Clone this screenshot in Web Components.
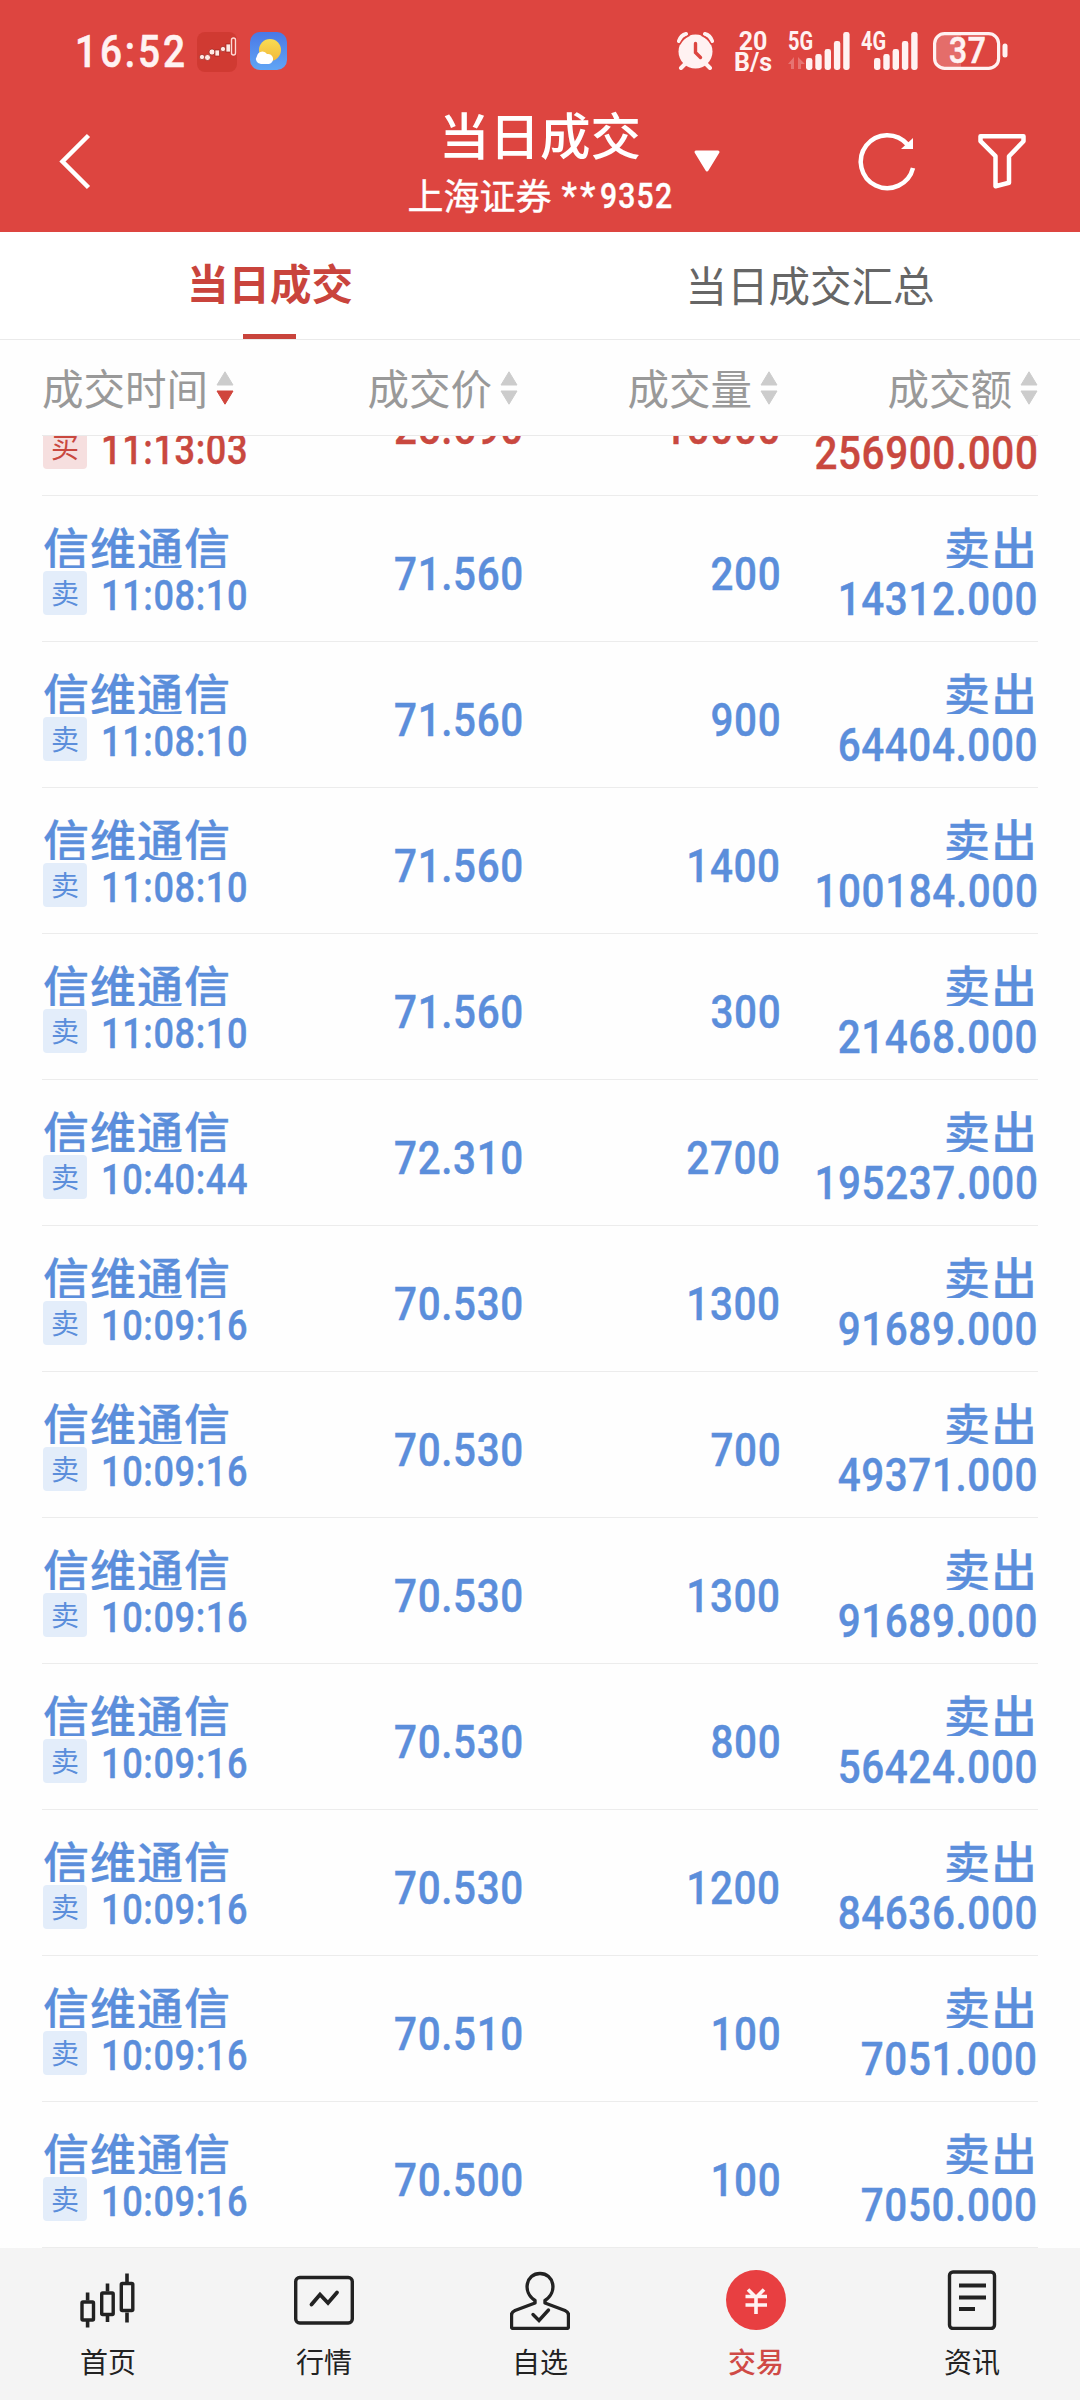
<!DOCTYPE html>
<html lang="zh-CN">
<head>
<meta charset="utf-8">
<title>当日成交</title>
<style>
    body {
        margin: 0;
        width: 1080px;
        height: 2400px;
        overflow: hidden;
        background: #fefefe;
        font-family: Roboto, "Noto Sans CJK SC", sans-serif;
    }
</style>
</head>
<body>
<trade-page></trade-page>

<script>
class BaseElement extends HTMLElement {
    constructor() {
        super();
        this.attachShadow({ mode: "open" });
    }
    connectedCallback() {
        const template = document.createElement('template');
        template.innerHTML = `<style>${this.getStyles()}</style>${this.getTemplate()}`;
        this.shadowRoot.replaceChildren(template.content.cloneNode(true));
    }
}

// Condensed digits, anchored left or right
class NumText extends BaseElement {
    getStyles() {
        const right = this.getAttribute('anchor') === 'right';
        return `
            :host { display: flex; justify-content: ${right ? 'flex-end' : 'flex-start'}; font-family: Roboto, sans-serif; font-weight: 500; line-height: 1; white-space: nowrap; }
            span { flex: none; transform: scaleX(.86); transform-origin: ${right ? 'right' : 'left'} center; letter-spacing: var(--gap, .7px); }
        `;
    }
    getTemplate() {
        return `<span><slot></slot></span>`;
    }
}

class SignalBars extends BaseElement {
    getStyles() {
        return `
            :host { display: block; position: relative; width: 62px; height: 38px; }
            span { position: absolute; left: 0; top: -3px; font: 700 25px/25px Roboto, sans-serif; transform: scaleX(.8); transform-origin: left; }
            svg { display: block; }
        `;
    }
    getTemplate() {
        const x = Number(this.getAttribute('x'));
        const tops = [26, 22, 17, 9, 0];
        const bars = tops.map((t, i) => `<rect x="${x + i * 9.3}" y="${t}" width="6.4" height="${38 - t}" rx="2.4"/>`).join('');
        const arrows = this.hasAttribute('data') ? `<path opacity=".28" d="M0 32l6-7v12h-3v-5zM10 37v-12l7 7h-4v5z"/>` : '';
        return `<span><slot></slot></span><svg width="62" height="38" fill="#fff2f2">${bars}${arrows}</svg>`;
    }
}

class StatusBar extends BaseElement {
    getStyles() {
        return `
            :host { display: flex; align-items: flex-start; height: 71px; padding: 32px 71px 0 75px; box-sizing: border-box; color: #fff2f2; }
            svg { display: block; }
            .clock { --gap: 3.4px; width: 122px; height: 38px; font-size: 45px; margin-top: -3px; -webkit-text-stroke: .6px #fff2f2; }
            .weather { margin-left: 13px; }
            .alarm { margin-left: auto; }
            .rate { width: 40px; margin: -1px 15px 0 19px; font: 700 25px/21px Roboto, sans-serif; text-align: center; }
            .second { margin-left: 11px; }
            .battery { position: relative; margin-left: 10px; width: 76px; height: 38px; }
            .battery num-text { position: absolute; left: 16px; top: 0; font-size: 37px; -webkit-text-stroke: .6px #fff2f2; }
        `;
    }
    getTemplate() {
        return `
            <num-text class="clock">16:52</num-text>
            <svg width="40" height="40" viewBox="0 0 40 40">
                <rect width="40" height="40" rx="8" fill="#d03a32"/>
                <g fill="#ffe9e4" stroke="#9d211b" stroke-width=".7">
                    <circle cx="5" cy="25" r="2.600"/><circle cx="10.500" cy="25.500" r="3"/><circle cx="15" cy="20" r="3"/>
                    <rect x="18" y="18" width="4.500" height="6"/><circle cx="26" cy="17" r="2.600"/><rect x="29" y="12" width="4.500" height="8"/>
                </g>
                <rect x="34.500" y="6" width="4" height="17" rx="2" fill="none" stroke="#ffd9d4" stroke-width="1.400"/>
            </svg>
            <svg class="weather" width="37" height="38" viewBox="0 0 37 38">
                <defs>
                    <linearGradient id="sky" x2="0" y2="1"><stop stop-color="#4a78e6"/><stop offset="1" stop-color="#60a5f5"/></linearGradient>
                    <linearGradient id="sun" x2="0" y2="1"><stop stop-color="#f8dc52"/><stop offset="1" stop-color="#f3b93c"/></linearGradient>
                </defs>
                <rect width="37" height="38" rx="10" fill="url(#sky)"/>
                <circle cx="20" cy="18" r="11" fill="url(#sun)"/>
                <path d="M11 32a5 5 0 0 1-4-8a5.500 5.500 0 0 1 10-2a5 5 0 0 1 2 10z" fill="#fff"/>
            </svg>
            <svg class="alarm" width="37" height="38" viewBox="0 0 37 38" fill="none" stroke="#fff2f2" stroke-width="4" stroke-linecap="round">
                <circle cx="18.500" cy="19.500" r="17" fill="#fff2f2" stroke="none"/>
                <path d="M2 9q2-6 7-7M35 9q-2-6-7-7M8 32l-4 4M29 32l4 4"/>
                <path stroke="#dd4540" stroke-width="1.600" d="M3 12Q6 6 12 3.500M34 12Q31 6 25 3.500"/>
                <path stroke="#dd4540" stroke-width="3.400" d="M18.500 11.500v9l5 5"/>
            </svg>
            <div class="rate">20<br>B/s</div>
            <signal-bars x="18" data>5G</signal-bars>
            <signal-bars class="second" x="13">4G</signal-bars>
            <div class="battery">
                <svg width="76" height="38" fill="none" stroke="#fff2f2" stroke-width="3.200">
                    <path d="M10 2h18v34h-18q-8 0-8-8v-18q0-8 8-8z" fill="#fff" fill-opacity=".22" stroke="none"/>
                    <rect x="1.600" y="1.600" width="64" height="34.800" rx="10"/>
                    <rect x="69.500" y="11.500" width="5" height="14" rx="2.500" fill="#fff2f2" stroke="none"/>
                </svg>
                <num-text>37</num-text>
            </div>
        `;
    }
}

class TitleBar extends BaseElement {
    getStyles() {
        return `
            :host { display: grid; height: 161px; box-sizing: border-box; color: #fff; }
            .middle { grid-area: 1 / 1; display: flex; flex-direction: column; align-items: center; }
            h1 { margin: 32px 0 0; font-size: 50.500px; line-height: 60px; font-weight: 500; font-family: "Noto Sans CJK SC", sans-serif; }
            .account { display: flex; align-items: center; height: 44px; margin-top: 9px; font: 400 36px/44px "Noto Sans CJK SC", sans-serif; -webkit-text-stroke: .4px #fff; }
            .stars { margin: 4px 0 0 10px; width: 38px; line-height: 36px; letter-spacing: 3px; font-family: Roboto, sans-serif; }
            num-text { --gap: 1.4px; width: 73px; font-size: 35px; margin-top: 4px; }
            svg { grid-area: 1 / 1; }
        `;
    }
    getTemplate() {
        return `
            <div class="middle">
                <h1><slot name="title"></slot></h1>
                <div class="account"><slot name="broker"></slot><span class="stars">**</span><num-text>9352</num-text></div>
            </div>
            <svg width="1080" height="161" viewBox="0 71 1080 161" fill="none" stroke="#fff" stroke-width="4.500">
                <path d="M88.500 135.500L62.500 161.500L88.500 187.500"/>
                <path d="M696 152h22l-11 18z" fill="#fff" stroke-width="3" stroke-linejoin="round"/>
                <path d="M907.500 144.500A26.500 26.500 0 1 0 913 168"/>
                <path d="M913 138v11h-12z" fill="#fff" stroke="none"/>
                <path d="M980.500 136.200h43v5l-14.500 15v26.500l-13.500 3.500v-30l-15-15z" stroke-linejoin="round"/>
            </svg>
        `;
    }
}

class TabItem extends BaseElement {
    getStyles() {
        return `
            :host { flex: 1; display: flex; flex-direction: column; align-items: center; font-size: 41.500px; line-height: 60px; color: #666; padding-top: 22px; font-family: "Noto Sans CJK SC", sans-serif; }
            :host([active]) { color: #c9443c; font-weight: 700; padding-top: 20px; }
            i { display: none; width: 53px; height: 5px; background: #c9443c; margin: auto 2px 0 0; }
            :host([active]) i { display: block; }
        `;
    }
    getTemplate() {
        return `<slot></slot><i></i>`;
    }
}

class TabBar extends BaseElement {
    getStyles() {
        return `:host { display: flex; height: 108px; box-sizing: border-box; background: #fff; border-bottom: 1px solid #eaeaea; }`;
    }
    getTemplate() {
        return `<slot></slot>`;
    }
}

class SortLabel extends BaseElement {
    getStyles() {
        return `
            :host { display: flex; align-items: center; gap: 8px; color: #999; font: 400 41.500px/60px "Noto Sans CJK SC", sans-serif; }
            svg { margin-top: 2px; }
        `;
    }
    getTemplate() {
        const down = this.getAttribute('sort') === 'down' ? '#d0453c' : '#ccc';
        return `
            <slot></slot>
            <svg width="18" height="34" stroke-width="1" stroke-linejoin="round">
                <path d="M9 .8l8 13.200h-16z" fill="#ccc" stroke="#ccc"/>
                <path d="M9 33.200l8-13.200h-16z" fill="${down}" stroke="${down}"/>
            </svg>
        `;
    }
}

class TableHead extends BaseElement {
    getStyles() {
        return `
            :host { display: grid; grid-template-columns: 231px 245px 260px 260px; justify-content: start; margin: 0 42px; padding-bottom: 2px; height: 96px; box-sizing: border-box; border-bottom: 1px solid #eaeaea; align-items: center; }
            sort-label { justify-self: end; }
            sort-label[sort] { justify-self: start; }
        `;
    }
    getTemplate() {
        return `
            <sort-label sort="down">成交时间</sort-label>
            <sort-label>成交价</sort-label>
            <sort-label>成交量</sort-label>
            <sort-label>成交额</sort-label>
        `;
    }
}

class TradeRow extends BaseElement {
    getStyles() {
        return `
            :host { --main: #5b8edb; --soft: #e3edfa; display: grid; grid-template-columns: 231px 251px 257px 257px; margin: 0 42px; height: 146px; box-sizing: border-box; border-bottom: 1px solid #ececec; color: var(--main); }
            :host([side="买"]) { --main: #c9483f; --soft: #f6dfdf; }
            .name { height: 49px; margin-top: 23px; padding-left: 1px; overflow: hidden; font: 500 46px/55px "Noto Sans CJK SC", sans-serif; letter-spacing: 1px; -webkit-text-stroke: .3px var(--main); white-space: nowrap; }
            .time { display: flex; align-items: flex-start; margin-top: 3px; padding-left: 1px; }
            .tag { flex: none; width: 44px; height: 44px; border-radius: 4px; background: var(--soft); font: 400 28px/43px "Noto Sans CJK SC", sans-serif; text-align: center; }
            .time num-text { margin: 4px 0 0 14px; font-size: 42px; }
            num-text { -webkit-text-stroke: .4px var(--main); }
            .mid { margin-top: 54px; font-size: 47px; }
            .deal { text-align: right; }
            .sum { margin-top: 7px; font-size: 47px; }
        `;
    }
    getTemplate() {
        const get = key => this.getAttribute(key);
        return `
            <div>
                <div class="name">${get('name')}</div>
                <div class="time"><span class="tag">${get('side')}</span><num-text>${get('time')}</num-text></div>
            </div>
            <num-text class="mid" anchor="right">${get('price')}</num-text>
            <num-text class="mid" anchor="right">${get('volume')}</num-text>
            <div class="deal">
                <div class="name">${get('side') === '买' ? '' : '卖出'}</div>
                <num-text class="sum" anchor="right">${get('amount')}</num-text>
            </div>
        `;
    }
}

class TradeList extends BaseElement {
    getStyles() {
        return `
            :host { display: flex; flex-direction: column; justify-content: flex-end; height: 1812px; overflow: hidden; }
            trade-row { flex: none; }
        `;
    }
    getTemplate() {
        const rows = [
            ['买', '11:13:03', '25.690', '10000', '256900.000'],
            ['卖', '11:08:10', '71.560', '200', '14312.000'],
            ['卖', '11:08:10', '71.560', '900', '64404.000'],
            ['卖', '11:08:10', '71.560', '1400', '100184.000'],
            ['卖', '11:08:10', '71.560', '300', '21468.000'],
            ['卖', '10:40:44', '72.310', '2700', '195237.000'],
            ['卖', '10:09:16', '70.530', '1300', '91689.000'],
            ['卖', '10:09:16', '70.530', '700', '49371.000'],
            ['卖', '10:09:16', '70.530', '1300', '91689.000'],
            ['卖', '10:09:16', '70.530', '800', '56424.000'],
            ['卖', '10:09:16', '70.530', '1200', '84636.000'],
            ['卖', '10:09:16', '70.510', '100', '7051.000'],
            ['卖', '10:09:16', '70.500', '100', '7050.000']
        ];
        return rows.map(([side, time, price, volume, amount], i) => `
            <trade-row name="${i ? '信维通信' : ''}" side="${side}" time="${time}" price="${price}" volume="${volume}" amount="${amount}"></trade-row>
        `).join('');
    }
}

class NavItem extends BaseElement {
    getStyles() {
        return `
            :host { flex: 1; display: flex; flex-direction: column; align-items: center; color: #222; font: 400 28px/40px "Noto Sans CJK SC", sans-serif; padding-top: 22px; }
            :host([active]) { color: #cf4a46; font-weight: 500; }
            svg { display: block; margin-bottom: 11px; }
        `;
    }
    getTemplate() {
        const icons = {
            home: `<path stroke-width="3.600" d="M9.600 22.500v8M9.600 51v6.500M29.500 13.500v8M29.500 46v6M49 3.500v9.500M49 42.500v10"/>
                <rect x="4" y="32" width="11.500" height="18" rx="1"/><rect x="23.700" y="23" width="11.500" height="21.500" rx="1"/><rect x="43.300" y="13.500" width="11.500" height="27" rx="1"/>`,
            market: `<rect x="1.700" y="7.500" width="56.600" height="45.500" rx="4"/><path stroke-width="3.800" stroke-linecap="round" d="M17.500 34.500l8.500-10l8 8.500l9-10.500"/>`,
            pick: `<path d="M25 30.500C12 22 16 3.500 30 3.500S48 22 35 30.500v2.500l20 7.500q3.500 1.500 3.500 4.500v11.500q0 2-2 2h-53q-2 0-2-2v-11.500q0-3 3.500-4.500l20-7.500z" stroke-linejoin="round"/><path stroke-linecap="round" d="M23 44.500l6 6l9.500-10.500"/>`,
            trade: `<circle cx="30" cy="30" r="30" fill="#e83f41" stroke="none"/><path stroke="#fff2f2" stroke-width="3.600" d="M22 19.500l8 8l8-8M19.500 26.500h21.500M19.500 35h21.500M30 27v17"/>`,
            news: `<rect x="7.500" y="2" width="45" height="56.500" rx="3.500"/><path stroke-width="3.800" d="M17 15.500h27M17 27.500h27M17 39h16"/>`
        };
        return `
            <svg width="60" height="60" fill="none" stroke="#222" stroke-width="3.400">${icons[this.getAttribute('icon')]}</svg>
            <slot></slot>
        `;
    }
}

class NavBar extends BaseElement {
    getStyles() {
        return `:host { display: flex; height: 152px; background: #f4f4f4; }`;
    }
    getTemplate() {
        return `<slot></slot>`;
    }
}

class TradePage extends BaseElement {
    getStyles() {
        return `
            :host { display: flex; flex-direction: column; width: 1080px; height: 2400px; }
            header { background: #dd4540; height: 232px; }
        `;
    }
    getTemplate() {
        return `
            <header>
                <status-bar></status-bar>
                <title-bar><span slot="title">当日成交</span><span slot="broker">上海证券</span></title-bar>
            </header>
            <tab-bar>
                <tab-item active>当日成交</tab-item>
                <tab-item>当日成交汇总</tab-item>
            </tab-bar>
            <table-head></table-head>
            <trade-list></trade-list>
            <nav-bar>
                <nav-item icon="home">首页</nav-item>
                <nav-item icon="market">行情</nav-item>
                <nav-item icon="pick">自选</nav-item>
                <nav-item icon="trade" active>交易</nav-item>
                <nav-item icon="news">资讯</nav-item>
            </nav-bar>
        `;
    }
}

customElements.define("num-text", NumText);
customElements.define("signal-bars", SignalBars);
customElements.define("status-bar", StatusBar);
customElements.define("title-bar", TitleBar);
customElements.define("tab-item", TabItem);
customElements.define("tab-bar", TabBar);
customElements.define("sort-label", SortLabel);
customElements.define("table-head", TableHead);
customElements.define("trade-row", TradeRow);
customElements.define("trade-list", TradeList);
customElements.define("nav-item", NavItem);
customElements.define("nav-bar", NavBar);
customElements.define("trade-page", TradePage);
</script>
</body>
</html>
